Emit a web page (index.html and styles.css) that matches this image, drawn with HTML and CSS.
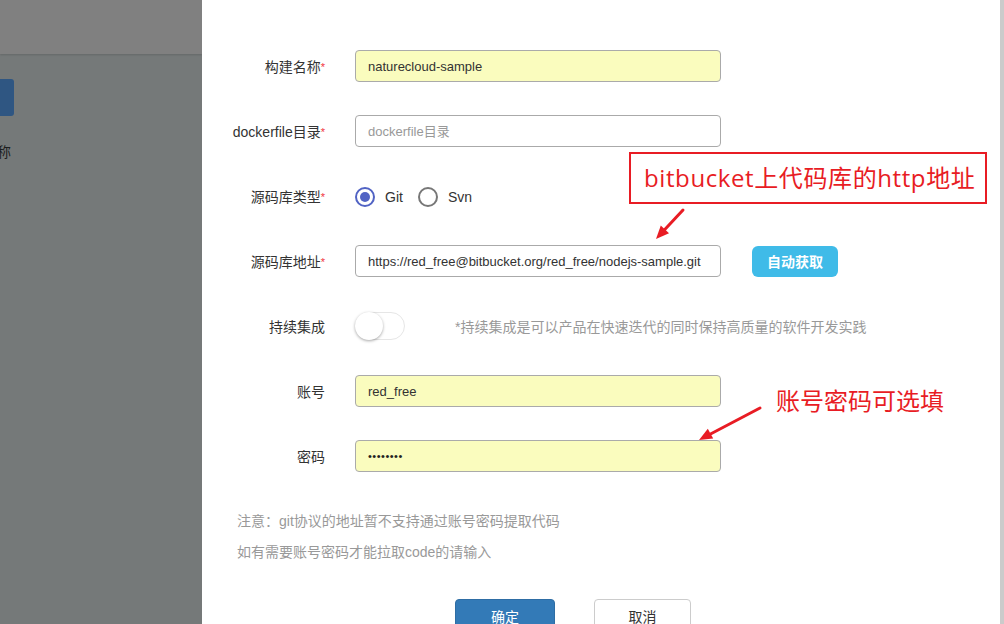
FILE: index.html
```html
<!DOCTYPE html>
<html lang="zh">
<head>
<meta charset="utf-8">
<title>构建</title>
<link rel="stylesheet" href="styles.css">
</head>
<body>
<div class="page">
  <div class="backdrop">
    <div class="bd-header"></div>
    <div class="bd-body">
      <div class="bd-btn"></div>
      <div class="bd-text">称</div>
    </div>
  </div>

  <div class="panel">
    <form class="form">
      <div class="row">
        <label class="label">构建名称<span class="req">*</span></label>
        <input class="input autofill" type="text" value="naturecloud-sample">
      </div>
      <div class="row">
        <label class="label">dockerfile目录<span class="req">*</span></label>
        <input class="input" type="text" placeholder="dockerfile目录">
      </div>
      <div class="row">
        <label class="label">源码库类型<span class="req">*</span></label>
        <div class="radios">
          <span class="radio checked"></span><span class="radio-text">Git</span>
          <span class="radio"></span><span class="radio-text">Svn</span>
        </div>
      </div>
      <div class="row">
        <label class="label">源码库地址<span class="req">*</span></label>
        <input class="input" type="text" value="https://red_free@bitbucket.org/red_free/nodejs-sample.git">
        <button class="btn-fetch" type="button">自动获取</button>
      </div>
      <div class="row">
        <label class="label">持续集成</label>
        <span class="switch"><span class="knob"></span></span>
        <span class="hint">*持续集成是可以产品在快速迭代的同时保持高质量的软件开发实践</span>
      </div>
      <div class="row">
        <label class="label">账号</label>
        <input class="input autofill" type="text" value="red_free">
      </div>
      <div class="row">
        <label class="label">密码</label>
        <div class="input autofill dots">••••••••</div>
      </div>
    </form>

    <div class="notes">
      <p>注意：git协议的地址暂不支持通过账号密码提取代码</p>
      <p>如有需要账号密码才能拉取code的请输入</p>
    </div>

    <div class="actions">
      <button class="btn btn-primary" type="button">确定</button>
      <button class="btn btn-default" type="button">取消</button>
    </div>

    <div class="callout callout-box">bitbucket上代码库的http地址</div>
    <div class="callout callout-plain">账号密码可选填</div>

    <svg class="arrows" width="798" height="624" viewBox="0 0 798 624">
      <line x1="481" y1="210" x2="462.8" y2="229.5" stroke="#e81c24" stroke-width="3" stroke-linecap="round"/>
      <polygon points="454,239 467,233.2 458.8,225.6" fill="#e81c24"/>
      <line x1="558" y1="408" x2="508.5" y2="434" stroke="#e81c24" stroke-width="3" stroke-linecap="round"/>
      <polygon points="497,440 511.2,438.6 505.8,428.8" fill="#e81c24"/>
    </svg>
  </div>

  <div class="scrollbar"></div>
</div>
</body>
</html>
```

FILE: styles.css
```css
html, body {
  margin: 0;
  padding: 0;
  height: 624px;
  overflow: hidden;
}

body {
  font-family: "Liberation Sans", "Noto Sans CJK SC", sans-serif;
  font-size: 14px;
  color: #333;
  background: #fff;
}

.page {
  display: flex;
  height: 624px;
}

/* dimmed page behind the drawer */
.backdrop {
  width: 202px;
  flex: none;
  display: flex;
  flex-direction: column;
  background: #757979;
  overflow: hidden;
}

.bd-header {
  height: 54px;
  background: #808080;
  box-shadow: 0 1px 2px rgba(0, 0, 0, 0.15);
}

.bd-body {
  padding-top: 25px;
}

.bd-btn {
  width: 14px;
  height: 37px;
  background: #2f5682;
  border-radius: 0 3px 3px 0;
}

.bd-text {
  margin-top: 26px;
  margin-left: -3px;
  font-size: 14px;
  line-height: 20px;
  color: #1e1f1f;
}

/* drawer panel */
.panel {
  position: relative;
  flex: 1;
  background: #fff;
}

.form {
  display: flex;
  flex-direction: column;
  gap: 33px;
  padding-top: 50px;
}

.row {
  display: flex;
  align-items: center;
  height: 32px;
}

.label {
  width: 123px;
  flex: none;
  text-align: right;
  margin-right: 30px;
  color: #333;
  white-space: nowrap;
}

.req {
  color: #f0353d;
  font-size: 11px;
  vertical-align: 1px;
}

.input {
  box-sizing: border-box;
  width: 366px;
  height: 32px;
  padding: 0 12px;
  border: 1px solid #aaa;
  border-radius: 4px;
  font: inherit;
  font-size: 13px;
  color: #333;
  background: #fff;
  outline: none;
}

.input::placeholder {
  color: #999;
}

.autofill {
  background: #fafcbe;
}

.dots {
  display: flex;
  align-items: center;
  font-size: 11px;
  letter-spacing: 0.5px;
  color: #222;
}

.radios {
  display: flex;
  align-items: center;
  padding-top: 1px;
}

.radio {
  box-sizing: border-box;
  width: 20px;
  height: 20px;
  border: 2px solid #777;
  border-radius: 50%;
  display: flex;
  align-items: center;
  justify-content: center;
}

.radio.checked {
  border-color: #5163c4;
}

.radio.checked::after {
  content: "";
  width: 10px;
  height: 10px;
  border-radius: 50%;
  background: #5163c4;
}

.radio-text {
  margin-left: 10px;
  margin-right: 15px;
  color: #333;
}

.btn-fetch {
  margin-left: 31px;
  width: 86px;
  height: 31px;
  border: none;
  border-radius: 6px;
  background: #3fbbe8;
  color: #fff;
  font: inherit;
  font-size: 14px;
  font-weight: bold;
}

.switch {
  position: relative;
  box-sizing: border-box;
  width: 50px;
  height: 28px;
  border: 1px solid #e6e6e6;
  border-radius: 14px;
  background: #fff;
  flex: none;
}

.knob {
  position: absolute;
  left: -1px;
  top: -1px;
  width: 28px;
  height: 28px;
  border-radius: 50%;
  background: #fff;
  box-shadow: 0 1px 3px rgba(0, 0, 0, 0.35);
}

.hint {
  margin-left: 50px;
  color: #999;
  white-space: nowrap;
}

.notes {
  margin-top: 34px;
  padding-left: 35px;
  color: #999;
}

.notes p {
  margin: 0;
  line-height: 31px;
}

.actions {
  display: flex;
  gap: 39px;
  margin-top: 31px;
  padding-left: 253px;
}

.btn {
  box-sizing: border-box;
  height: 34px;
  border-radius: 4px;
  font: inherit;
  font-size: 14px;
}

.btn-primary {
  width: 100px;
  border: 1px solid #2e6da4;
  background: #337ab7;
  color: #fff;
}

.btn-default {
  width: 97px;
  border: 1px solid #ccc;
  background: #fff;
  color: #333;
}

/* annotations drawn over the screenshot */
.callout {
  position: absolute;
  font-family: "Open Sans", "Noto Sans CJK SC", sans-serif;
  font-size: 24px;
  color: #e81c24;
  white-space: nowrap;
}

.callout-box {
  left: 427px;
  top: 152px;
  box-sizing: border-box;
  width: 358px;
  height: 52px;
  border: 2px solid #e81c24;
  padding-left: 13px;
  line-height: 48px;
  letter-spacing: 0.6px;
}

.callout-plain {
  left: 574px;
  top: 384px;
  line-height: 34px;
}

.arrows {
  position: absolute;
  left: 0;
  top: 0;
  pointer-events: none;
}

.scrollbar {
  width: 4px;
  flex: none;
  background: #cbcbcb;
}
```
